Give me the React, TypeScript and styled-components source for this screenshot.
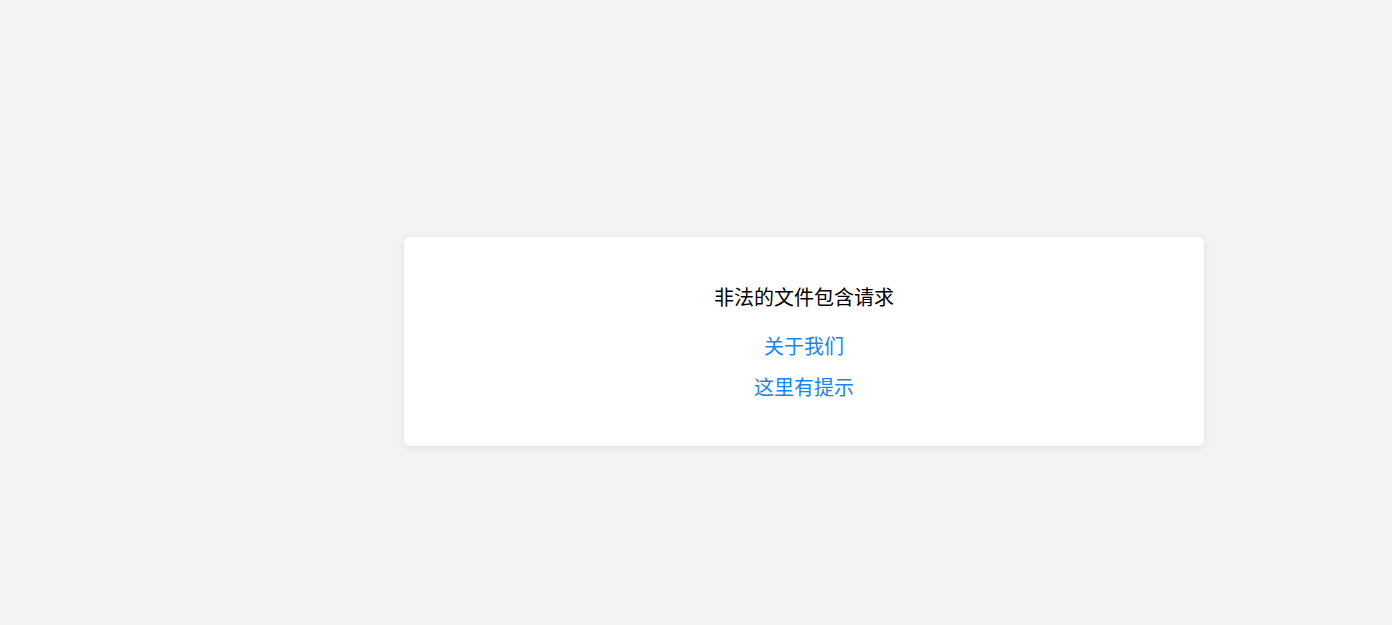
import React from "react";
import styled, { createGlobalStyle } from "styled-components";

const Global = createGlobalStyle`
  html, body {
    margin: 0;
    padding: 0;
    background: #f3f3f3;
  }
  body {
    font-family: "Noto Sans CJK SC", "Noto Sans", sans-serif;
  }
`;

const Page = styled.div`
  min-height: 625px;
  box-sizing: border-box;
  padding: 237px 0 0 404px;
`;

const Card = styled.div`
  width: 800px;
  height: 209px;
  box-sizing: border-box;
  background: #ffffff;
  border-radius: 5px;
  box-shadow: 0 2px 8px rgba(0, 0, 0, 0.08);
  display: flex;
  flex-direction: column;
  align-items: center;
  padding-top: 45px;
`;

const Title = styled.div`
  font-size: 20px;
  line-height: 30px;
  color: #000;
`;

const Link = styled.a<{ $top: number }>`
  font-size: 20px;
  line-height: 30px;
  color: #1a84f3;
  text-decoration: none;
  margin-top: ${(p) => p.$top}px;
`;

export default function App() {
  return (
    <>
      <Global />
      <Page>
        <Card>
          <Title>非法的文件包含请求</Title>
          <Link href="#" $top={19}>关于我们</Link>
          <Link href="#" $top={11}>这里有提示</Link>
        </Card>
      </Page>
    </>
  );
}
